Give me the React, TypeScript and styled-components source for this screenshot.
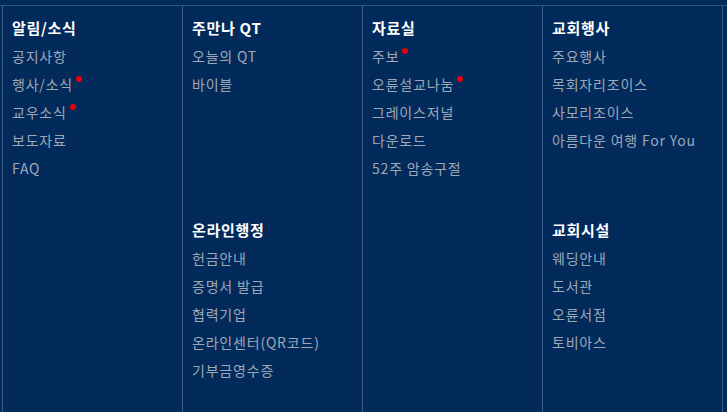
import React from "react";
import styled, { createGlobalStyle } from "styled-components";

const Global = createGlobalStyle`
  html, body { margin: 0; padding: 0; background: #022b5c; overflow: hidden; }
  body { font-family: "Noto Sans CJK KR", "Noto Sans", sans-serif; }
  * { box-sizing: border-box; }
`;

const Page = styled.div`
  min-height: 100vh;
  background: #022b5c;
  padding-top: 5px;
`;

const Menu = styled.nav`
  border-top: 1px solid #2e5482;
  padding-left: 2px;
`;

const Grid = styled.div`
  display: grid;
  grid-template-columns: 180px 180px 180px 181px;
  grid-template-rows: auto 1fr;
  min-height: calc(100vh - 6px);
`;

const Cell = styled.div<{ $last?: boolean }>`
  border-left: 1px solid #3a5d88;
  border-right: ${(p) => (p.$last ? "1px solid #3a5d88" : "none")};
  padding: 8px 10px 26px 9px;
`;

const Heading = styled.h3`
  margin: 0;
  font-size: 15px;
  font-weight: 700;
  letter-spacing: 0.7px;
  line-height: 28px;
  color: #ffffff;
  white-space: nowrap;
`;

const List = styled.ul`
  margin: 0;
  padding: 0;
  list-style: none;
`;

const Item = styled.li`
  line-height: 28px;
  font-size: 14px;
  letter-spacing: 0.8px;
  color: #9ea8b7;
  white-space: nowrap;
`;

const Label = styled.span<{ $new?: boolean }>`
  position: relative;
  &::after {
    content: "";
    display: ${(p) => (p.$new ? "block" : "none")};
    position: absolute;
    right: -9px;
    top: 2px;
    width: 6px;
    height: 6px;
    border-radius: 50%;
    background: #e8000b;
  }
`;

type Group = { title: string; items: { label: string; isNew?: boolean }[] } | null;

const rows: Group[][] = [
  [
    {
      title: "알림/소식",
      items: [
        { label: "공지사항" },
        { label: "행사/소식", isNew: true },
        { label: "교우소식", isNew: true },
        { label: "보도자료" },
        { label: "FAQ" },
      ],
    },
    { title: "주만나 QT", items: [{ label: "오늘의 QT" }, { label: "바이블" }] },
    {
      title: "자료실",
      items: [
        { label: "주보", isNew: true },
        { label: "오륜설교나눔", isNew: true },
        { label: "그레이스저널" },
        { label: "다운로드" },
        { label: "52주 암송구절" },
      ],
    },
    {
      title: "교회행사",
      items: [
        { label: "주요행사" },
        { label: "목회자리조이스" },
        { label: "사모리조이스" },
        { label: "아름다운 여행 For You" },
      ],
    },
  ],
  [
    null,
    {
      title: "온라인행정",
      items: [
        { label: "헌금안내" },
        { label: "증명서 발급" },
        { label: "협력기업" },
        { label: "온라인센터(QR코드)" },
        { label: "기부금영수증" },
      ],
    },
    null,
    {
      title: "교회시설",
      items: [
        { label: "웨딩안내" },
        { label: "도서관" },
        { label: "오륜서점" },
        { label: "토비아스" },
      ],
    },
  ],
];

export default function App() {
  return (
    <Page>
      <Global />
      <Menu>
        <Grid>
          {rows.map((row, r) =>
            row.map((g, c) => (
              <Cell key={`${r}-${c}`} $last={c === 3}>
                {g && (
                  <>
                    <Heading>{g.title}</Heading>
                    <List>
                      {g.items.map((it) => (
                        <Item key={it.label}>
                          <Label $new={it.isNew}>{it.label}</Label>
                        </Item>
                      ))}
                    </List>
                  </>
                )}
              </Cell>
            ))
          )}
        </Grid>
      </Menu>
    </Page>
  );
}
